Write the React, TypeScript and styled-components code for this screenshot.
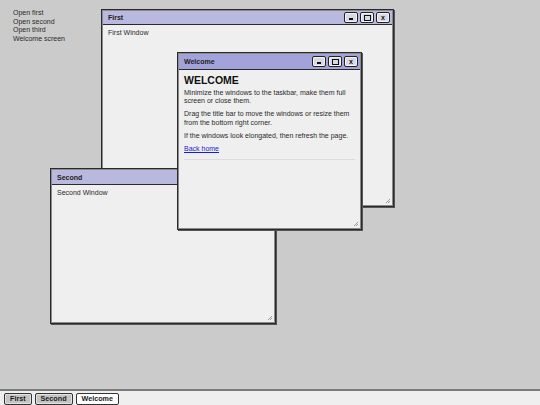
import styled, { createGlobalStyle } from "styled-components";

const GlobalStyle = createGlobalStyle`
  html, body {
    margin: 0;
    padding: 0;
    width: 540px;
    height: 405px;
    overflow: hidden;
  }
  body {
    font-family: "Liberation Sans", Arial, sans-serif;
    color: #222;
  }
`;

const Screen = styled.div`
  width: 540px;
  height: 405px;
  display: flex;
  flex-direction: column;
  background: #cbcbcb;
`;

const Desktop = styled.div`
  position: relative;
  flex: 1;
  padding: 9px 0 0 13px;
`;

const Launcher = styled.ul`
  list-style: none;
  margin: 0;
  padding: 0;
  display: flex;
  flex-direction: column;
  font-size: 7px;
  line-height: 8.6px;
  color: #2a2a2a;
`;

const LaunchItem = styled.li`
  cursor: pointer;
`;

const Frame = styled.div<{ $x: number; $y: number; $w: number; $h: number }>`
  position: absolute;
  left: ${({ $x }) => $x}px;
  top: ${({ $y }) => $y}px;
  width: ${({ $w }) => $w}px;
  height: ${({ $h }) => $h}px;
  box-sizing: border-box;
  display: flex;
  flex-direction: column;
  background: #efefef;
  border: 1px solid #2a2a2a;
  box-shadow: inset 0 0 0 1px #8a8a8a, 1px 1px 0 #555;
`;

const TitleBar = styled.div<{ $active?: boolean; $h: number }>`
  height: ${({ $h }) => $h}px;
  margin: 1px 1px 0 1px;
  display: flex;
  align-items: center;
  justify-content: space-between;
  padding: 0 2px 0 5px;
  background: ${({ $active }) => ($active ? "#a3a3dc" : "#b9b9df")};
  border-bottom: 1px solid #2a2a2a;
  font-size: 7px;
  font-weight: bold;
  color: #222;
`;

const Controls = styled.div`
  display: flex;
  gap: 2px;
`;

const Ctrl = styled.button`
  width: 14px;
  height: 11px;
  padding: 0;
  display: flex;
  align-items: center;
  justify-content: center;
  box-sizing: border-box;
  border: 1px solid #222;
  border-radius: 2px;
  background: #d9d9e6;
  box-shadow: inset 0 0 0 1px #f4f4f4;
  font-family: "Liberation Sans", Arial, sans-serif;
  font-size: 7px;
  font-weight: bold;
  line-height: 1;
  color: #111;
`;

const MinBar = styled.span`
  width: 4px;
  height: 1.5px;
  margin-top: 3px;
  background: #111;
`;

const MaxBox = styled.span`
  width: 5px;
  height: 4px;
  border: 1px solid #111;
`;

const Body = styled.div`
  flex: 1;
  position: relative;
  margin: 0 1px 1px 1px;
  padding: 4px 5px;
  font-size: 7px;
  line-height: 8.2px;
  color: #2a2a2a;
`;

const Heading = styled.h1`
  margin: 0 0 3px;
  font-size: 10.5px;
  line-height: 12px;
  font-weight: bold;
  color: #111;
`;

const Para = styled.p`
  margin: 0 0 5px;
`;

const Link = styled.a`
  color: #1a1adb;
  text-decoration: underline;
`;

const Rule = styled.hr`
  margin: 6px 0 0;
  border: none;
  border-top: 1px solid #dcdcdc;
`;

const Grip = styled.svg`
  position: absolute;
  right: 2px;
  bottom: 2px;
`;

const Taskbar = styled.div`
  height: 13px;
  display: flex;
  align-items: center;
  gap: 3px;
  padding: 1px 4px 0;
  background: #efefef;
  border-top: 2px solid #7c7c7c;
`;

const TaskButton = styled.button<{ $active?: boolean }>`
  height: 12px;
  padding: 0 5px;
  box-sizing: border-box;
  border: 1px solid #333;
  border-radius: 2px;
  background: ${({ $active }) => ($active ? "#ffffff" : "#c4c4c4")};
  box-shadow: inset 0 0 0 1px ${({ $active }) => ($active ? "#ffffff" : "#e2e2e2")};
  font-family: "Liberation Sans", Arial, sans-serif;
  font-size: 7.2px;
  font-weight: bold;
  color: #222;
  line-height: 1;
`;

function ResizeGrip() {
  return (
    <Grip width="5" height="5" viewBox="0 0 5 5">
      <path d="M5 1 L1 5 M5 3 L3 5" stroke="#888" strokeWidth="0.8" />
    </Grip>
  );
}

function WindowControls() {
  return (
    <Controls>
      <Ctrl>
        <MinBar />
      </Ctrl>
      <Ctrl>
        <MaxBox />
      </Ctrl>
      <Ctrl>x</Ctrl>
    </Controls>
  );
}

export default function App() {
  return (
    <Screen>
      <GlobalStyle />
      <Desktop>
        <Launcher>
          <LaunchItem>Open first</LaunchItem>
          <LaunchItem>Open second</LaunchItem>
          <LaunchItem>Open third</LaunchItem>
          <LaunchItem>Welcome screen</LaunchItem>
        </Launcher>

        <Frame $x={101} $y={9} $w={293} $h={198}>
          <TitleBar $h={13}>
            <span>First</span>
            <WindowControls />
          </TitleBar>
          <Body>
            First Window
            <ResizeGrip />
          </Body>
        </Frame>

        <Frame $x={50} $y={168} $w={226} $h={156}>
          <TitleBar $h={14}>
            <span>Second</span>
            <WindowControls />
          </TitleBar>
          <Body>
            Second Window
            <ResizeGrip />
          </Body>
        </Frame>

        <Frame $x={177} $y={52} $w={185} $h={178}>
          <TitleBar $active $h={15}>
            <span>Welcome</span>
            <WindowControls />
          </TitleBar>
          <Body>
            <Heading>WELCOME</Heading>
            <Para>
              Minimize the windows to the taskbar, make them full screen or
              close them.
            </Para>
            <Para>
              Drag the title bar to move the windows or resize them from the
              bottom right corner.
            </Para>
            <Para>If the windows look elongated, then refresh the page.</Para>
            <Link href="#">Back home</Link>
            <Rule />
            <ResizeGrip />
          </Body>
        </Frame>
      </Desktop>
      <Taskbar>
        <TaskButton>First</TaskButton>
        <TaskButton>Second</TaskButton>
        <TaskButton $active>Welcome</TaskButton>
      </Taskbar>
    </Screen>
  );
}
